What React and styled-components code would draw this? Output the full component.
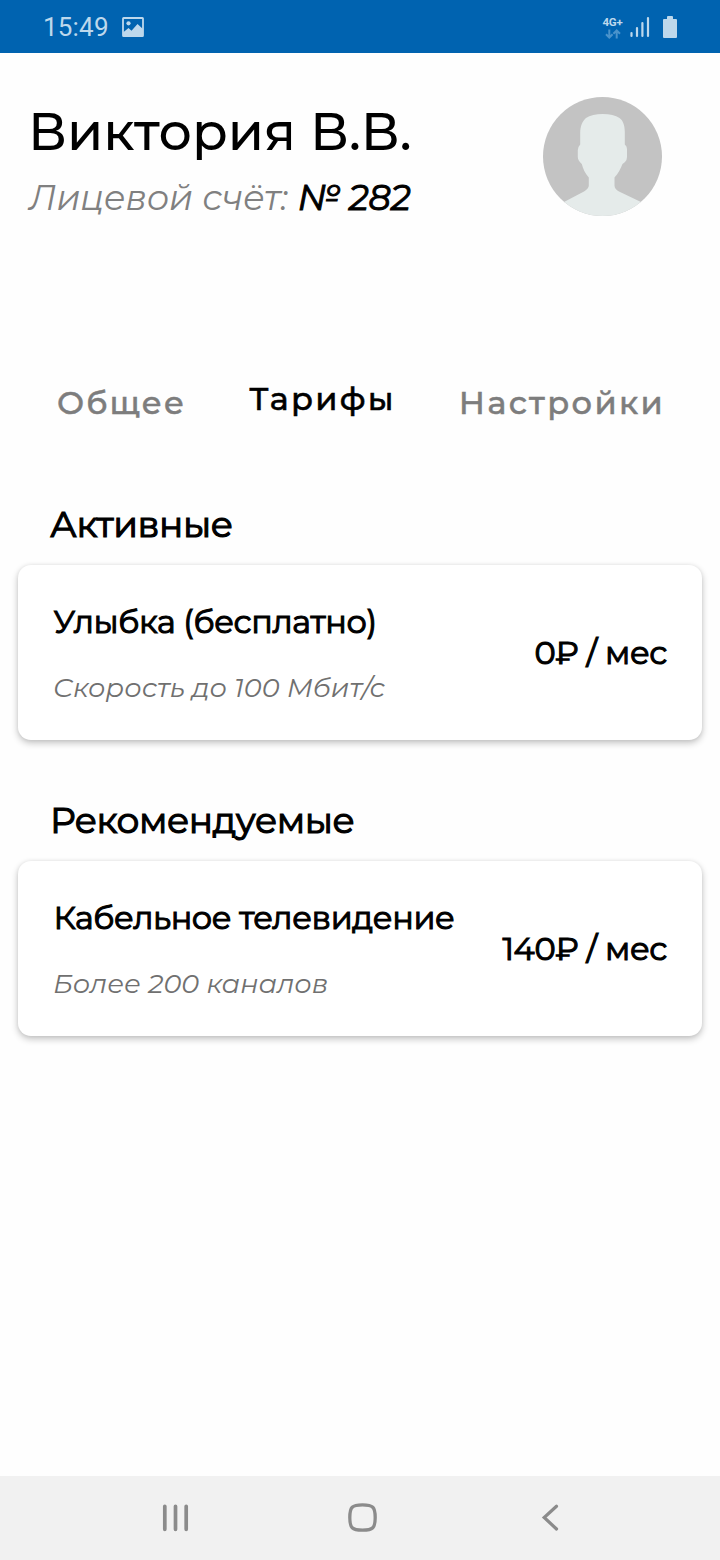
import React from "react";
import styled, { createGlobalStyle } from "styled-components";

const GlobalStyle = createGlobalStyle`
  * { box-sizing: border-box; }
  body {
    margin: 0;
    background: #fefefe;
    color: #000;
    font-family: Montserrat, Inter, "Open Sans", sans-serif;
  }
`;

const Screen = styled.div`
  width: 720px;
  height: 1560px;
  display: flex;
  flex-direction: column;
  overflow: hidden;
`;

const StatusBar = styled.header`
  height: 53px;
  flex: none;
  padding: 0 43px;
  display: flex;
  align-items: center;
  justify-content: space-between;
  background: #0063b0;
  color: #bdd8ec;
  font-family: Roboto, sans-serif;
`;

const StatusGroup = styled.div`
  display: flex;
  align-items: center;
`;

const Clock = styled.span`
  font-size: 26px;
  line-height: 30px;
  letter-spacing: 0.2px;
  margin-right: 13px;
  padding-top: 1px;
`;

const Network = styled.div`
  width: 23px;
  height: 26px;
  padding-top: 2px;
  margin-right: 6px;
  display: flex;
  flex-direction: column;
  align-items: center;
`;

const NetworkLabel = styled.span`
  font-size: 11.5px;
  line-height: 13px;
  font-weight: 700;
  letter-spacing: -0.2px;
`;

const SignalSlot = styled.div`
  display: flex;
  margin-right: 13px;
`;

const Main = styled.main`
  flex: 1;
  padding: 0 18px;
`;

const Profile = styled.section`
  height: 326px;
  padding: 44px 40px 0 10px;
  display: flex;
  justify-content: space-between;
  align-items: flex-start;
`;

const ProfileInfo = styled.div`
  padding-top: 4px;
  white-space: nowrap;
`;

const Name = styled.h1`
  margin: 0 0 15px;
  font-size: 52.2px;
  line-height: 60px;
  font-weight: 500;
`;

const Account = styled.p`
  margin: 0 0 0 1px;
  font-size: 35px;
  line-height: 44px;
  font-weight: 400;
  font-style: italic;
  color: #808080;
  letter-spacing: -0.1px;
`;

const AccountNumber = styled.b`
  margin-left: 1px;
  font-weight: 400;
  color: #000;
  -webkit-text-stroke: 1px currentColor;
`;

const Tabs = styled.nav`
  height: 123px;
  padding: 0 37px 0 39px;
  display: flex;
  align-items: flex-start;
  justify-content: space-between;
`;

const Tab = styled.a`
  padding-top: ${(p) => (p.$active ? 0 : 4)}px;
  font-size: 32px;
  line-height: 40px;
  font-weight: 500;
  letter-spacing: ${(p) => p.$spacing}px;
  color: ${(p) => (p.$active ? "#000" : "#7d7d7d")};
  -webkit-text-stroke: 0.5px currentColor;
`;

const Section = styled.section`
  margin-bottom: 58px;
`;

const SectionTitle = styled.h2`
  margin: 0 0 19px 32px;
  font-size: 36px;
  line-height: 44px;
  font-weight: 400;
  letter-spacing: -0.4px;
  -webkit-text-stroke: 1.2px currentColor;
`;

const Card = styled.article`
  height: 175px;
  padding: 0 35px;
  border-radius: 13px;
  background: #fff;
  box-shadow: 0 3px 7px rgba(0, 0, 0, 0.24), 0 0 4px rgba(0, 0, 0, 0.06);
  display: flex;
  align-items: center;
  justify-content: space-between;
  white-space: nowrap;
`;

const CardBody = styled.div`
  padding-top: 1px;
`;

const CardTitle = styled.h3`
  margin: 0 0 29px 0.5px;
  font-size: 32px;
  line-height: 40px;
  font-weight: 400;
  letter-spacing: -0.37px;
  -webkit-text-stroke: 1.1px currentColor;
`;

const CardNote = styled.p`
  margin: 0;
  font-size: 27.1px;
  line-height: 34px;
  font-weight: 400;
  font-style: italic;
  color: #707070;
`;

const Price = styled.span`
  font-size: 32px;
  line-height: 40px;
  font-weight: 400;
  letter-spacing: -0.35px;
  -webkit-text-stroke: 1.1px currentColor;
`;

const NavBar = styled.footer`
  height: 84px;
  flex: none;
  padding: 0 159px;
  display: flex;
  align-items: center;
  justify-content: space-between;
  background: #f1f1f1;
`;

const HomeSlot = styled.div`
  display: flex;
  padding-left: 4px;
`;

const PhotoIcon = () => (
  <svg width="22" height="20" viewBox="0 0 22 20">
    <rect x="1" y="1" width="20" height="18" rx="0.6" fill="none" stroke="#bdd8ec" strokeWidth="1.8" />
    <circle cx="6.5" cy="6.3" r="2.1" fill="#bdd8ec" />
    <path d="M1 15.5 6.5 11l3 2.8L15.5 7 21 12v7H1z" fill="#bdd8ec" />
  </svg>
);

const DataArrows = () => (
  <svg width="16" height="10" viewBox="0 0 16 10" fill="none" stroke="#4a93cb" strokeWidth="2">
    <path d="M4.3 0.5v7.7M1 5.2l3.3 3.3 3.3-3.3M11.7 9.5V1.8M8.4 4.8l3.3-3.3L15 4.8" />
  </svg>
);

const SignalIcon = () => (
  <svg width="20" height="22" viewBox="0 0 20 22" fill="none" stroke="#bdd8ec" strokeWidth="2.2" strokeLinecap="round">
    <path d="M1.5 17v3M7 12v8M12.4 7v13M18 2v18" />
  </svg>
);

const BatteryIcon = () => (
  <svg width="14" height="22" viewBox="0 0 14 22" fill="#bdd8ec">
    <path d="M4 1q0-1 1-1h4q1 0 1 1v2h3q1 0 1 1v17q0 1-1 1H1q-1 0-1-1V4q0-1 1-1h3z" />
  </svg>
);

const Avatar = () => (
  <svg width="119" height="119" viewBox="0 0 119 119">
    <clipPath id="avatar-clip">
      <circle cx="59.5" cy="59.5" r="59.5" />
    </clipPath>
    <g clipPath="url(#avatar-clip)">
      <rect width="119" height="119" fill="#c3c3c3" />
      <path
        d="M59.5 17C67 17 72.5 18.3 76.5 21C80.5 24 81.8 29 81.8 35V47.5Q84 49 84 52V60Q84 63 82 65L79.5 67C77.5 72 75.5 76 71.5 80.5V88.5Q71.5 92 76 94.5L98 105V119H21V105L41 94.5Q45.8 91.5 45.8 88.5V80.5C42 76 40 72 38.8 67Q34.8 63.5 34.8 60V53Q34.8 50 37.2 47.5V36C37.2 29 39.5 24 43 21C47 18.3 53 17 59.5 17Z"
        fill="#e5ebea"
      />
    </g>
  </svg>
);

const RecentsIcon = () => (
  <svg width="32" height="32" viewBox="0 0 32 32" fill="none" stroke="#8b8b8b" strokeWidth="3.7" strokeLinecap="round">
    <path d="M5.8 4.3v23M16.5 4.3v23M27.2 4.3v23" />
  </svg>
);

const HomeIcon = () => (
  <svg width="32" height="32" viewBox="0 0 32 32" fill="none" stroke="#8b8b8b" strokeWidth="3.3">
    <path d="M16.5 2.8C27 2.8 29.2 5 29.2 15.5S27 28.2 16.5 28.2 3.8 26 3.8 15.5 6 2.8 16.5 2.8Z" />
  </svg>
);

const BackIcon = () => (
  <svg width="32" height="32" viewBox="0 0 32 32" fill="none" stroke="#8b8b8b" strokeWidth="3.2" strokeLinecap="round">
    <path d="M27.5 4.3 15.2 15.5 27.5 27" />
  </svg>
);

const tabs = [
  { label: "Общее", spacing: 2.1 },
  { label: "Тарифы", spacing: 2.25, active: true },
  { label: "Настройки", spacing: 2.35 },
];

const sections = [
  {
    title: "Активные",
    name: "Улыбка (бесплатно)",
    note: "Скорость до 100 Мбит/с",
    price: "0₽ / мес",
  },
  {
    title: "Рекомендуемые",
    name: "Кабельное телевидение",
    note: "Более 200 каналов",
    price: "140₽ / мес",
  },
];

export default function App() {
  return (
    <Screen>
      <GlobalStyle />
      <StatusBar>
        <StatusGroup>
          <Clock>15:49</Clock>
          <PhotoIcon />
        </StatusGroup>
        <StatusGroup>
          <Network>
            <NetworkLabel>4G+</NetworkLabel>
            <DataArrows />
          </Network>
          <SignalSlot>
            <SignalIcon />
          </SignalSlot>
          <BatteryIcon />
        </StatusGroup>
      </StatusBar>
      <Main>
        <Profile>
          <ProfileInfo>
            <Name>Виктория В.В.</Name>
            <Account>
              Лицевой счёт: <AccountNumber>№ 282</AccountNumber>
            </Account>
          </ProfileInfo>
          <Avatar />
        </Profile>
        <Tabs>
          {tabs.map((t) => (
            <Tab key={t.label} $active={t.active} $spacing={t.spacing}>
              {t.label}
            </Tab>
          ))}
        </Tabs>
        {sections.map((s) => (
          <Section key={s.title}>
            <SectionTitle>{s.title}</SectionTitle>
            <Card>
              <CardBody>
                <CardTitle>{s.name}</CardTitle>
                <CardNote>{s.note}</CardNote>
              </CardBody>
              <Price>{s.price}</Price>
            </Card>
          </Section>
        ))}
      </Main>
      <NavBar>
        <RecentsIcon />
        <HomeSlot>
          <HomeIcon />
        </HomeSlot>
        <BackIcon />
      </NavBar>
    </Screen>
  );
}
